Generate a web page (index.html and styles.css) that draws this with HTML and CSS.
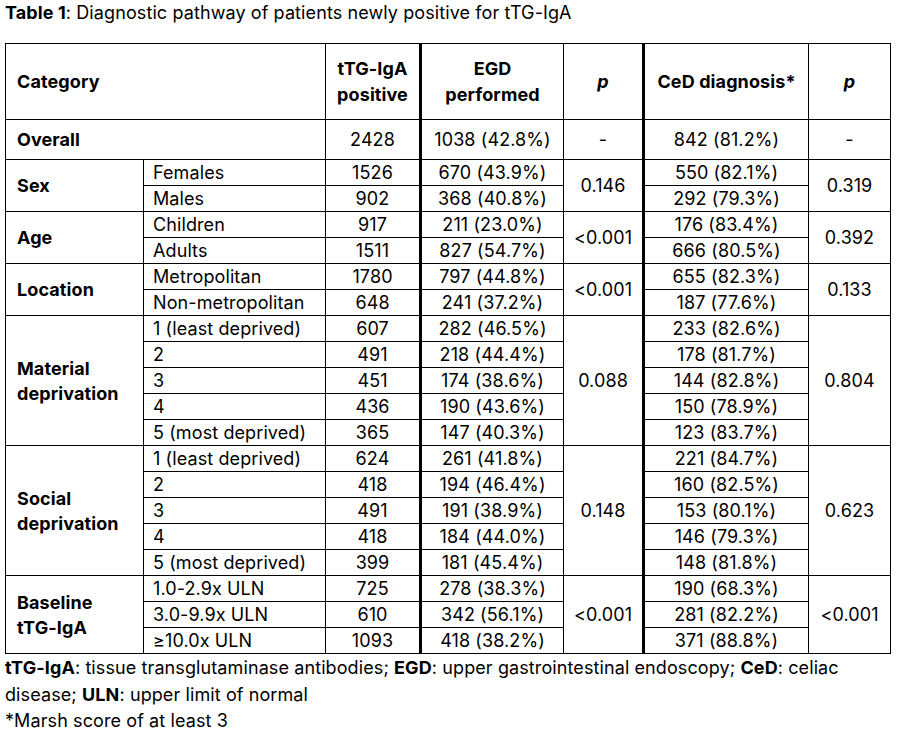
FILE: index.html
```html
<!DOCTYPE html>
<html lang="en">
<head>
    <meta charset="UTF-8">
    <meta name="viewport" content="width=device-width, initial-scale=1.0">
    <title>Table 1</title>
    <link rel="stylesheet" href="styles.css">
</head>
<body>
    <p class="caption"><b>Table 1</b>: Diagnostic pathway of patients newly positive for tTG-IgA</p>

    <table class="results">
        <colgroup>
            <col class="c-cat">
            <col class="c-sub">
            <col class="c-pos">
            <col class="c-egd">
            <col class="c-p">
            <col class="c-ced">
            <col class="c-p2">
        </colgroup>
        <thead>
            <tr class="head">
                <th colspan="2" class="cat">Category</th>
                <th>tTG-IgA<br>positive</th>
                <th class="thick">EGD<br>performed</th>
                <th><i>p</i></th>
                <th class="thick">CeD diagnosis*</th>
                <th><i>p</i></th>
            </tr>
        </thead>
        <tbody>
            <tr class="overall">
                <td colspan="2" class="cat">Overall</td>
                <td>2428</td>
                <td class="thick">1038 (42.8%)</td>
                <td>-</td>
                <td class="thick">842 (81.2%)</td>
                <td>-</td>
            </tr>

            <!-- Sex -->
            <tr>
                <td rowspan="2" class="cat">Sex</td>
                <td class="sub">Females</td>
                <td>1526</td>
                <td class="thick">670 (43.9%)</td>
                <td rowspan="2">0.146</td>
                <td class="thick">550 (82.1%)</td>
                <td rowspan="2">0.319</td>
            </tr>
            <tr>
                <td class="sub">Males</td>
                <td>902</td>
                <td class="thick">368 (40.8%)</td>
                <td class="thick">292 (79.3%)</td>
            </tr>

            <!-- Age -->
            <tr>
                <td rowspan="2" class="cat">Age</td>
                <td class="sub">Children</td>
                <td>917</td>
                <td class="thick">211 (23.0%)</td>
                <td rowspan="2">&lt;0.001</td>
                <td class="thick">176 (83.4%)</td>
                <td rowspan="2">0.392</td>
            </tr>
            <tr>
                <td class="sub">Adults</td>
                <td>1511</td>
                <td class="thick">827 (54.7%)</td>
                <td class="thick">666 (80.5%)</td>
            </tr>

            <!-- Location -->
            <tr>
                <td rowspan="2" class="cat">Location</td>
                <td class="sub">Metropolitan</td>
                <td>1780</td>
                <td class="thick">797 (44.8%)</td>
                <td rowspan="2">&lt;0.001</td>
                <td class="thick">655 (82.3%)</td>
                <td rowspan="2">0.133</td>
            </tr>
            <tr>
                <td class="sub">Non-metropolitan</td>
                <td>648</td>
                <td class="thick">241 (37.2%)</td>
                <td class="thick">187 (77.6%)</td>
            </tr>

            <!-- Material deprivation -->
            <tr>
                <td rowspan="5" class="cat">Material<br>deprivation</td>
                <td class="sub">1 (least deprived)</td>
                <td>607</td>
                <td class="thick">282 (46.5%)</td>
                <td rowspan="5">0.088</td>
                <td class="thick">233 (82.6%)</td>
                <td rowspan="5">0.804</td>
            </tr>
            <tr>
                <td class="sub">2</td>
                <td>491</td>
                <td class="thick">218 (44.4%)</td>
                <td class="thick">178 (81.7%)</td>
            </tr>
            <tr>
                <td class="sub">3</td>
                <td>451</td>
                <td class="thick">174 (38.6%)</td>
                <td class="thick">144 (82.8%)</td>
            </tr>
            <tr>
                <td class="sub">4</td>
                <td>436</td>
                <td class="thick">190 (43.6%)</td>
                <td class="thick">150 (78.9%)</td>
            </tr>
            <tr>
                <td class="sub">5 (most deprived)</td>
                <td>365</td>
                <td class="thick">147 (40.3%)</td>
                <td class="thick">123 (83.7%)</td>
            </tr>

            <!-- Social deprivation -->
            <tr>
                <td rowspan="5" class="cat">Social<br>deprivation</td>
                <td class="sub">1 (least deprived)</td>
                <td>624</td>
                <td class="thick">261 (41.8%)</td>
                <td rowspan="5">0.148</td>
                <td class="thick">221 (84.7%)</td>
                <td rowspan="5">0.623</td>
            </tr>
            <tr>
                <td class="sub">2</td>
                <td>418</td>
                <td class="thick">194 (46.4%)</td>
                <td class="thick">160 (82.5%)</td>
            </tr>
            <tr>
                <td class="sub">3</td>
                <td>491</td>
                <td class="thick">191 (38.9%)</td>
                <td class="thick">153 (80.1%)</td>
            </tr>
            <tr>
                <td class="sub">4</td>
                <td>418</td>
                <td class="thick">184 (44.0%)</td>
                <td class="thick">146 (79.3%)</td>
            </tr>
            <tr>
                <td class="sub">5 (most deprived)</td>
                <td>399</td>
                <td class="thick">181 (45.4%)</td>
                <td class="thick">148 (81.8%)</td>
            </tr>

            <!-- Baseline tTG-IgA -->
            <tr>
                <td rowspan="3" class="cat">Baseline<br>tTG-IgA</td>
                <td class="sub">1.0-2.9x ULN</td>
                <td>725</td>
                <td class="thick">278 (38.3%)</td>
                <td rowspan="3">&lt;0.001</td>
                <td class="thick">190 (68.3%)</td>
                <td rowspan="3">&lt;0.001</td>
            </tr>
            <tr>
                <td class="sub">3.0-9.9x ULN</td>
                <td>610</td>
                <td class="thick">342 (56.1%)</td>
                <td class="thick">281 (82.2%)</td>
            </tr>
            <tr>
                <td class="sub">&ge;10.0x ULN</td>
                <td>1093</td>
                <td class="thick">418 (38.2%)</td>
                <td class="thick">371 (88.8%)</td>
            </tr>
        </tbody>
    </table>

    <p class="notes"><b>tTG-IgA</b>: tissue transglutaminase antibodies; <b>EGD</b>: upper gastrointestinal endoscopy; <b>CeD</b>: celiac<br>disease; <b>ULN</b>: upper limit of normal<br>*Marsh score of at least 3</p>
</body>
</html>
```

FILE: styles.css
```css
body {
    font-family: 'Inter', 'Liberation Sans', sans-serif;
    background: #fff;
    color: #000;
    margin: 0;
    padding: 0 5px;
    font-size: 18px;
    letter-spacing: 0.1px;
}

.caption {
    margin: 0;
    padding-top: 1px;
    height: 42px;
    line-height: 24px;
}

.results {
    border-collapse: collapse;
    width: 885px;
    table-layout: fixed;
}

.c-cat { width: 138px; }
.c-sub { width: 182px; }
.c-pos { width: 95px; }
.c-egd { width: 143px; }
.c-p { width: 80px; }
.c-ced { width: 165px; }
.c-p2 { width: 82px; }

.results th,
.results td {
    border: 1px solid #000;
    padding: 0;
    text-align: center;
    vertical-align: middle;
    line-height: 22px;
}

.results th {
    font-weight: 700;
    line-height: 26px;
}

.results .thick {
    border-left: 3px solid #000;
}

.results .cat {
    text-align: left;
    font-weight: 700;
    padding-left: 11px;
    line-height: 25px;
}

.results .sub {
    text-align: left;
    padding-left: 9px;
}

.head {
    height: 76px;
}

.results tbody tr {
    height: 26px;
}

.results tbody tr.overall {
    height: 40px;
}

.notes {
    margin: 0;
    padding-top: 1px;
    line-height: 26.5px;
    white-space: nowrap;
}
```
